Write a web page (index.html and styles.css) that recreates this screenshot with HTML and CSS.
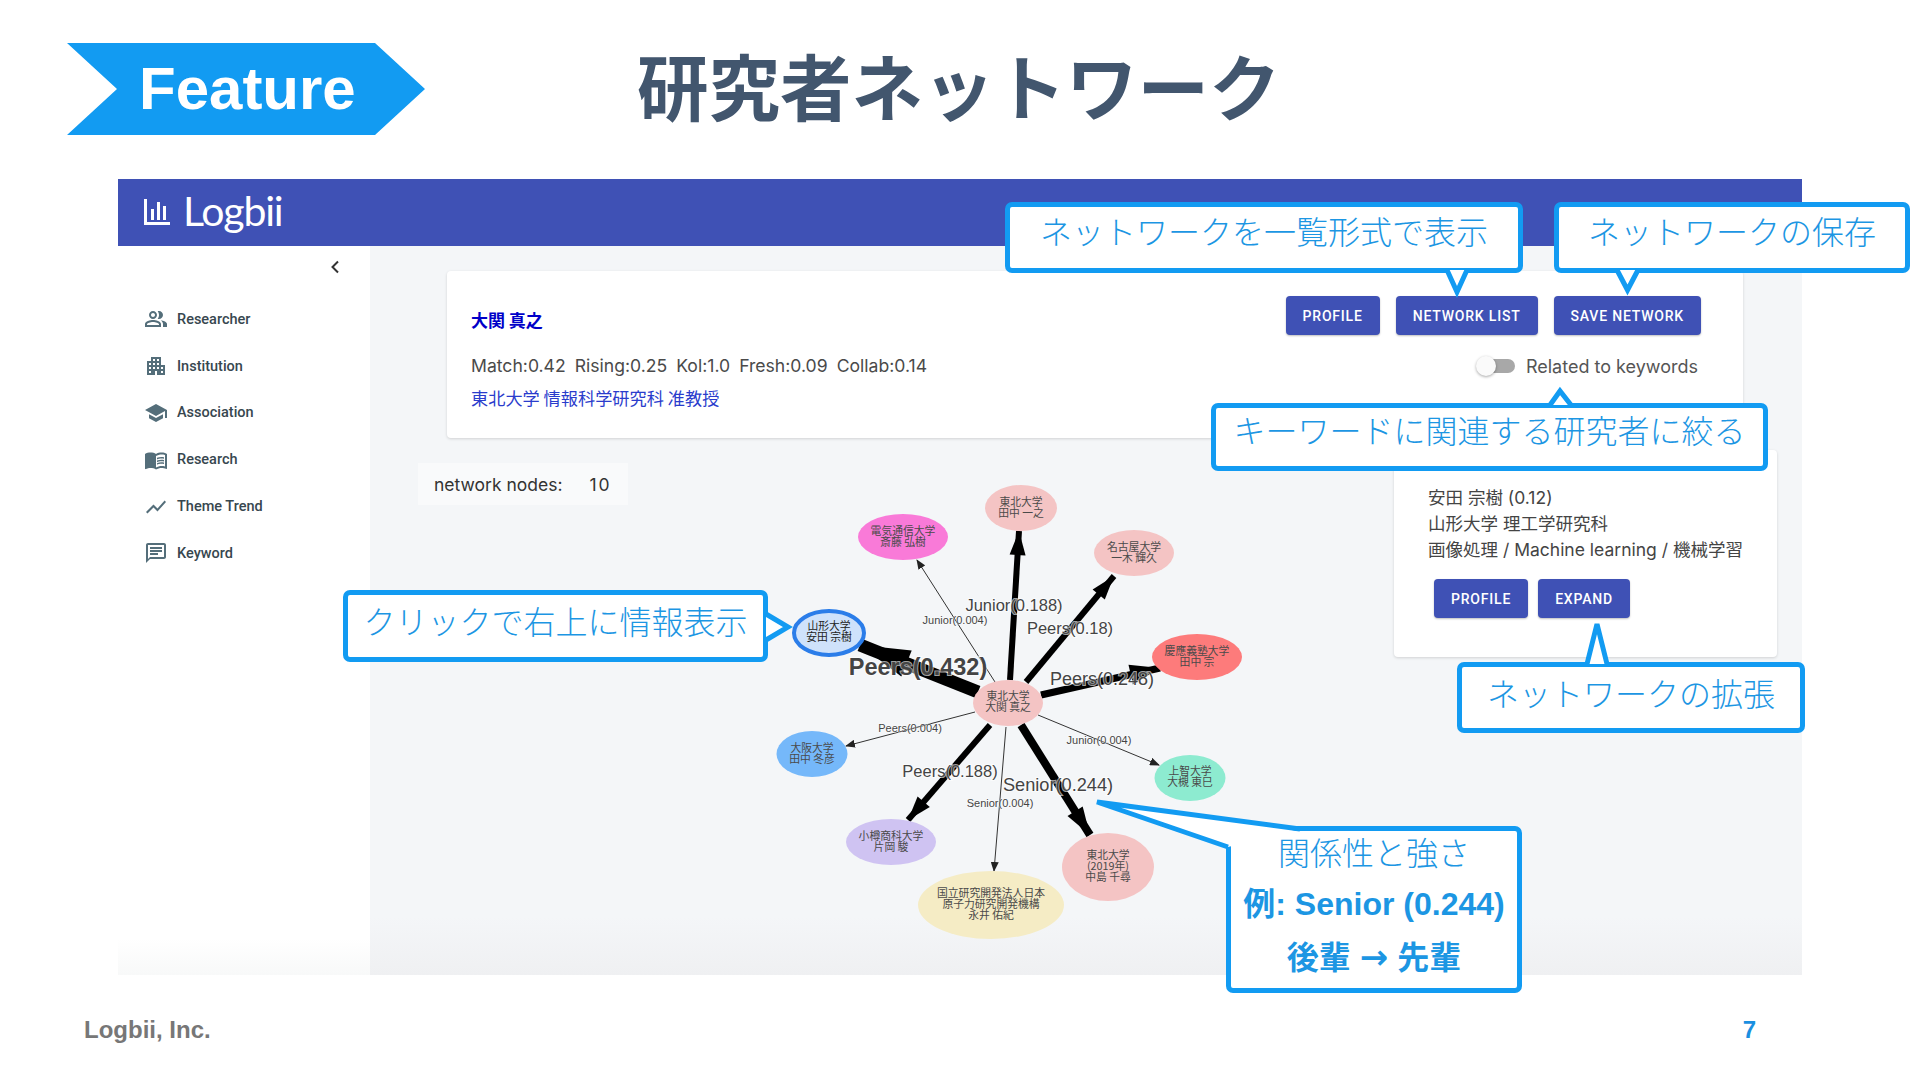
FILE: index.html
```html
<!DOCTYPE html>
<html>
<head>
    <title>Feature - 研究者ネットワーク</title>
    <link rel="stylesheet" href="styles.css">
</head>
<body>
<div class="slide">
    <!-- Slide heading -->
    <div class="slide-head">
        <div class="ribbon">Feature</div>
        <h1 class="slide-title">研究者ネットワーク</h1>
    </div>

    <!-- Screenshot of the app -->
    <div class="app">
        <header class="app-bar">
            <svg class="logo-mark" viewBox="0 0 26 26" fill="#fff">
                <rect x="0" y="0" width="3" height="26"/>
                <rect x="0" y="23" width="26" height="3"/>
                <rect x="7" y="10" width="3" height="11"/>
                <rect x="13" y="3" width="3" height="18"/>
                <rect x="19" y="7" width="3" height="14"/>
            </svg>
            <span class="logo-text">Logbii</span>
        </header>
        <div class="app-body">
            <nav class="sidebar">
                <div class="collapse">
                    <svg viewBox="0 0 12 16" width="12" height="16"><path d="M9 2.5L3.5 8 9 13.5" fill="none" stroke="#333" stroke-width="2"/></svg>
                </div>
                <a class="nav-item">
                    <svg class="nav-icon" viewBox="0 0 24 24"><path d="M16.67 13.13C18.04 14.06 19 15.32 19 17v3h4v-3c0-2.18-3.57-3.47-6.33-3.87zM15 12c2.21 0 4-1.79 4-4s-1.79-4-4-4c-.47 0-.91.1-1.33.24C14.5 5.27 15 6.58 15 8s-.5 2.73-1.33 3.76c.42.14.86.24 1.33.24zM9 12c2.21 0 4-1.79 4-4s-1.79-4-4-4-4 1.79-4 4 1.79 4 4 4zm0-6c1.1 0 2 .9 2 2s-.9 2-2 2-2-.9-2-2 .9-2 2-2zM9 13c-2.67 0-8 1.34-8 4v3h16v-3c0-2.66-5.33-4-8-4zm6 5H3v-.99C3.2 16.29 6.3 15 9 15s5.8 1.29 6 2z"/></svg>
                    Researcher
                </a>
                <a class="nav-item">
                    <svg class="nav-icon" viewBox="0 0 24 24"><path d="M17 11V3H7v4H3v14h8v-4h2v4h8V11h-4zM7 19H5v-2h2v2zm0-4H5v-2h2v2zm0-4H5V9h2v2zm4 4H9v-2h2v2zm0-4H9V9h2v2zm0-4H9V5h2v2zm4 8h-2v-2h2v2zm0-4h-2V9h2v2zm0-4h-2V5h2v2zm4 12h-2v-2h2v2zm0-4h-2v-2h2v2z"/></svg>
                    Institution
                </a>
                <a class="nav-item">
                    <svg class="nav-icon" viewBox="0 0 24 24"><path d="M5 13.18v4L12 21l7-3.82v-4L12 17l-7-3.82zM12 3L1 9l11 6 9-4.91V17h2V9L12 3z"/></svg>
                    Association
                </a>
                <a class="nav-item">
                    <svg class="nav-icon" viewBox="0 0 24 24"><path d="M21 5c-1.11-.35-2.33-.5-3.5-.5-1.95 0-4.05.4-5.5 1.5-1.45-1.1-3.55-1.5-5.5-1.5S2.45 4.9 1 6v14.65c0 .25.25.5.5.5.1 0 .15-.05.25-.05C3.1 20.45 5.05 20 6.5 20c1.95 0 4.05.4 5.5 1.5 1.35-.85 3.8-1.5 5.5-1.5 1.65 0 3.35.3 4.75 1.05.1.05.15.05.25.05.25 0 .5-.25.5-.5V6c-.6-.45-1.25-.75-2-1zm0 13.5c-1.1-.35-2.3-.5-3.5-.5-1.7 0-4.15.65-5.5 1.5V8c1.35-.85 3.8-1.5 5.5-1.5 1.2 0 2.4.15 3.5.5v11.5z"/><path d="M17.5 10.5c.88 0 1.73.09 2.5.26V9.24c-.79-.15-1.64-.24-2.5-.24-1.7 0-3.24.29-4.5.83v1.66c1.13-.64 2.7-.99 4.5-.99zM13 12.49v1.66c1.13-.64 2.7-.99 4.5-.99.88 0 1.73.09 2.5.26V11.9c-.79-.15-1.64-.24-2.5-.24-1.7 0-3.24.3-4.5.83zM17.5 14.33c-1.7 0-3.24.29-4.5.83v1.66c1.13-.64 2.7-.99 4.5-.99.88 0 1.73.09 2.5.26v-1.52c-.79-.16-1.64-.24-2.5-.24z"/></svg>
                    Research
                </a>
                <a class="nav-item">
                    <svg class="nav-icon" viewBox="0 0 24 24"><path d="M3.5 18.49l6-6.01 4 4L22 6.92l-1.41-1.41-7.09 7.97-4-4L2 16.99z"/></svg>
                    Theme Trend
                </a>
                <a class="nav-item">
                    <svg class="nav-icon" viewBox="0 0 24 24"><path d="M20 2H4c-1.1 0-2 .9-2 2v18l4-4h14c1.1 0 2-.9 2-2V4c0-1.1-.9-2-2-2zm0 14H6l-2 2V4h16v12zM6 9h12v2H6zm8 5H6v-2h8zm4-6H6V6h12z"/></svg>
                    Keyword
                </a>
            </nav>

            <main class="main">
                <!-- Network diagram, drawn in slide coordinates -->
                <svg class="graph" viewBox="370 246 1432 729">
                    <defs>
                        <marker id="tip" markerUnits="userSpaceOnUse" markerWidth="10" markerHeight="8" refX="9" refY="4" orient="auto">
                            <path d="M0 0L10 4L0 8z" fill="#222"/>
                        </marker>
                    </defs>

                    <g class="edge-thin">
                        <line x1="995" y1="682" x2="917" y2="560" marker-end="url(#tip)"/>
                        <line x1="975" y1="712" x2="846" y2="746" marker-end="url(#tip)"/>
                        <line x1="1038" y1="715" x2="1159" y2="765" marker-end="url(#tip)"/>
                        <line x1="1006" y1="727" x2="994" y2="871" marker-end="url(#tip)"/>
                    </g>
                    <g class="edge-bold">
                        <line x1="978" y1="692" x2="860" y2="645" stroke-width="13"/>
                        <polygon points="860,645 911.7,650.5 901.3,676.5"/>
                        <line x1="1010" y1="680" x2="1019" y2="531" stroke-width="6"/>
                        <polygon points="1019,531 1009.6,554.5 1025.6,555.5"/>
                        <line x1="1026" y1="682" x2="1114" y2="576" stroke-width="6"/>
                        <polygon points="1114,576 1104.8,599.6 1092.6,589.4"/>
                        <line x1="1041" y1="695" x2="1160" y2="668" stroke-width="7"/>
                        <polygon points="1160,668 1132.9,684.4 1128.5,664.8"/>
                        <line x1="990" y1="725" x2="908" y2="820" stroke-width="6"/>
                        <polygon points="908,820 929.8,807 917.6,796.6"/>
                        <line x1="1021" y1="725" x2="1090" y2="835" stroke-width="8"/>
                        <polygon points="1090,835 1082.7,806.5 1067.5,816.1"/>
                    </g>

                    <ellipse cx="1021" cy="508" rx="36" ry="23" fill="#f4c4c4"/>
                    <ellipse cx="1134" cy="553" rx="40" ry="23" fill="#f4c4c4"/>
                    <ellipse cx="903" cy="537" rx="45" ry="23" fill="#f97ad8"/>
                    <ellipse cx="1197" cy="657" rx="45" ry="23" fill="#fd7b7b"/>
                    <ellipse cx="829" cy="633" rx="35" ry="22" fill="#cfe2fb" stroke="#2b7de9" stroke-width="4"/>
                    <ellipse cx="812" cy="754" rx="35.5" ry="23" fill="#75b8fa"/>
                    <ellipse cx="1190" cy="778" rx="35.5" ry="23" fill="#8debd0"/>
                    <ellipse cx="891" cy="842" rx="45" ry="23" fill="#cfc3f2"/>
                    <ellipse cx="991" cy="905" rx="73" ry="34" fill="#f5ecc5"/>
                    <ellipse cx="1108" cy="867" rx="46" ry="34" fill="#f4c4c4"/>
                    <ellipse cx="1008" cy="703" rx="35" ry="23" fill="#f4c4c4"/>

                    <g class="node-label">
                        <text x="1021" y="506">東北大学</text><text x="1021" y="517">田中 一之</text>
                        <text x="1134" y="551">名古屋大学</text><text x="1134" y="562">一木 輝久</text>
                        <text x="903" y="535">電気通信大学</text><text x="903" y="546">斎藤 弘樹</text>
                        <text x="1197" y="655">慶應義塾大学</text><text x="1197" y="666">田中 宗</text>
                        <text class="node-dark" x="829" y="630">山形大学</text><text class="node-dark" x="829" y="641">安田 宗樹</text>
                        <text x="812" y="752">大阪大学</text><text x="812" y="763">田中 冬彦</text>
                        <text x="1190" y="775">上智大学</text><text x="1190" y="786">大槻 東巳</text>
                        <text x="891" y="840">小樽商科大学</text><text x="891" y="851">片岡 駿</text>
                        <text x="991" y="897">国立研究開発法人日本</text><text x="991" y="908">原子力研究開発機構</text><text x="991" y="919">永井 佑紀</text>
                        <text x="1108" y="859">東北大学</text><text x="1108" y="870">(2019年)</text><text x="1108" y="881">中島 千尋</text>
                        <text x="1008" y="700">東北大学</text><text x="1008" y="711">大関 真之</text>
                    </g>

                    <g class="edge-label">
                        <text class="label-top" x="918" y="675">Peers(0.432)</text>
                        <text class="label-mid" x="1014" y="611">Junior(0.188)</text>
                        <text class="label-mid" x="1070" y="634">Peers(0.18)</text>
                        <text class="label-wide" x="1102" y="685">Peers(0.248)</text>
                        <text class="label-mid" x="950" y="777">Peers(0.188)</text>
                        <text class="label-big" x="1058" y="791">Senior(0.244)</text>
                        <text class="label-small" x="955" y="624">Junior(0.004)</text>
                        <text class="label-small" x="910" y="732">Peers(0.004)</text>
                        <text class="label-small" x="1099" y="744">Junior(0.004)</text>
                        <text class="label-small" x="1000" y="807">Senior(0.004)</text>
                    </g>
                </svg>

                <section class="card">
                    <div>
                        <div class="person-name">大関 真之</div>
                        <div class="scores">
                            <span>Match:0.42</span><span>Rising:0.25</span><span>Kol:1.0</span><span>Fresh:0.09</span><span>Collab:0.14</span>
                        </div>
                        <div class="person-org">東北大学 情報科学研究科 准教授</div>
                    </div>
                    <div class="card-side">
                        <div class="btn-row">
                            <button class="btn">PROFILE</button>
                            <button class="btn">NETWORK LIST</button>
                            <button class="btn">SAVE NETWORK</button>
                        </div>
                        <div class="switch-row">
                            <span class="switch"><span class="switch-knob"></span></span>
                            Related to keywords
                        </div>
                    </div>
                </section>

                <div class="node-count"><span>network nodes:</span><span class="node-total">10</span></div>

                <section class="info-card">
                    <p>安田 宗樹 (0.12)</p>
                    <p>山形大学 理工学研究科</p>
                    <p>画像処理 / Machine learning / 機械学習</p>
                    <div class="info-btns">
                        <button class="btn">PROFILE</button>
                        <button class="btn">EXPAND</button>
                    </div>
                </section>
            </main>
        </div>
    </div>

    <footer class="slide-foot">
        <span>Logbii, Inc.</span>
        <span class="page-no">7</span>
    </footer>

    <!-- Callouts over the screenshot -->
    <div class="callout callout-list">ネットワークを一覧形式で表示</div>
    <div class="callout callout-save">ネットワークの保存</div>
    <div class="callout callout-keyword">キーワードに関連する研究者に絞る</div>
    <div class="callout callout-expand">ネットワークの拡張</div>
    <div class="callout callout-click">クリックで右上に情報表示</div>
    <div class="callout callout-edge">
        <div>関係性と強さ</div>
        <div class="callout-strong">例: Senior (0.244)</div>
        <div class="callout-strong">後輩 <span class="arrow">→</span> 先輩</div>
    </div>
    <svg class="tails" viewBox="0 0 1920 1081">
        <path d="M1447 270L1457 292L1467 270"/>
        <path d="M1617 270L1627.5 290L1638 270"/>
        <path d="M1550 405L1560 391L1571 405"/>
        <path d="M1587 664L1597 624L1607 664"/>
        <path d="M766 614L788 627L766 640"/>
        <path d="M1300 829L1097 802L1228 847"/>
    </svg>
</div>
</body>
</html>
```

FILE: styles.css
```css
* {
    box-sizing: border-box;
}

body {
    margin: 0;
    background-color: #fff;
    font-family: "Liberation Sans", "Noto Sans CJK JP", sans-serif;
}

.slide {
    position: relative;
    width: 1920px;
    height: 1081px;
    overflow: hidden;
    background-color: #fff;
}

/* Slide heading */
.slide-head {
    display: flex;
    height: 179px;
    padding: 43px 0 0 67px;
}

.ribbon {
    width: 358px;
    height: 92px;
    padding-left: 72px;
    background-color: #129bf2;
    clip-path: polygon(0 0, 308px 0, 100% 50%, 308px 100%, 0 100%, 50px 50%);
    color: #fff;
    font-size: 60px;
    font-weight: bold;
    line-height: 92px;
}

.slide-title {
    margin: 0 0 0 212px;
    color: #42566e;
    font-family: "Noto Sans CJK JP", sans-serif;
    font-size: 71.5px;
    font-weight: bold;
    line-height: 82px;
}

/* App frame */
.app {
    display: flex;
    flex-direction: column;
    width: 1684px;
    height: 796px;
    margin-left: 118px;
}

.app-bar {
    display: flex;
    flex: none;
    align-items: center;
    height: 67px;
    padding-left: 26px;
    background-color: #3f51b5;
}

.logo-mark {
    width: 26px;
    height: 26px;
    margin-top: -1px;
}

.logo-text {
    margin: -5px 0 0 13px;
    color: #fff;
    font-family: "Lato", sans-serif;
    font-size: 41px;
    font-weight: 400;
    letter-spacing: -1.2px;
}

.app-body {
    display: flex;
    flex: 1;
    min-height: 0;
}

.sidebar {
    flex: none;
    width: 252px;
    background: linear-gradient(#fff 95%, #f8f9f9 100%);
}

.collapse {
    display: flex;
    align-items: center;
    justify-content: flex-end;
    height: 42px;
    margin-bottom: 8px;
    padding-right: 29px;
}

.nav-item {
    display: flex;
    align-items: center;
    gap: 9px;
    height: 46.8px;
    padding-left: 26px;
    color: #37474f;
    font-family: "Roboto", sans-serif;
    font-size: 14.5px;
    font-weight: 500;
}

.nav-icon {
    width: 24px;
    height: 24px;
    fill: #546e7a;
}

.main {
    position: relative;
    flex: 1;
    padding: 25px 59px 0 77px;
    background: linear-gradient(#f4f6f8 92%, #eff0f2 100%);
}

.graph {
    position: absolute;
    top: 0;
    left: 0;
    width: 1432px;
    height: 729px;
}

.edge-thin line {
    stroke: #333;
    stroke-width: 1;
}

.edge-bold line {
    stroke: #000;
}

.edge-bold polygon {
    fill: #000;
}

.node-label text {
    fill: #4a4a4a;
    font-family: "Noto Sans CJK JP", sans-serif;
    font-size: 10.8px;
    text-anchor: middle;
}

.node-label .node-dark {
    fill: #222;
}

/* light halo keeps the labels readable over the edges */
.edge-label text {
    fill: #444;
    stroke: rgba(255, 255, 255, 0.65);
    stroke-width: 2px;
    paint-order: stroke;
    font-family: "Liberation Sans", sans-serif;
    text-anchor: middle;
}

.edge-label .label-top {
    font-size: 23.5px;
    font-weight: bold;
}

.edge-label .label-mid {
    font-size: 16.5px;
}

.edge-label .label-wide {
    font-size: 18px;
}

.edge-label .label-big {
    font-size: 18.2px;
}

.edge-label .label-small {
    font-size: 11px;
    stroke-width: 1px;
}

/* Cards */
.card {
    position: relative;
    display: flex;
    justify-content: space-between;
    height: 167px;
    padding: 34px 42px 0 24px;
    border-radius: 4px;
    background-color: #fff;
    box-shadow: 0 1px 3px rgba(0, 0, 0, 0.15);
}

.person-name {
    color: #0000c8;
    font-family: "Noto Sans CJK JP", sans-serif;
    font-size: 17px;
    font-weight: bold;
    line-height: 30px;
}

.scores {
    display: flex;
    gap: 9px;
    margin-top: 16px;
    color: #4a4a4a;
    font-family: "Inter", sans-serif;
    font-size: 17.6px;
    line-height: 30px;
}

.person-org {
    margin-top: 4px;
    color: #2a3ccc;
    font-family: "Noto Sans CJK JP", sans-serif;
    font-size: 17.2px;
    line-height: 26px;
}

.card-side {
    display: flex;
    flex-direction: column;
    align-items: flex-end;
    margin-top: -9px;
}

.btn-row {
    display: flex;
    gap: 16px;
}

.btn {
    height: 39px;
    padding: 0 17px;
    border: none;
    border-radius: 4px;
    background-color: #3f51b5;
    box-shadow: 0 1px 2px rgba(0, 0, 0, 0.25);
    color: #fff;
    font-family: "Roboto", sans-serif;
    font-size: 14px;
    font-weight: 500;
    letter-spacing: 0.8px;
}

.switch-row {
    display: flex;
    align-items: center;
    height: 30px;
    margin-top: 16px;
    padding-right: 3px;
    color: #555;
    font-family: "Inter", sans-serif;
    font-size: 18px;
}

.switch {
    position: relative;
    width: 34px;
    height: 14px;
    margin-right: 11px;
    border-radius: 7px;
    background-color: #a8a8a8;
}

.switch-knob {
    position: absolute;
    top: -3px;
    left: -5px;
    width: 20px;
    height: 20px;
    border-radius: 50%;
    background-color: #fafafa;
    box-shadow: 0 1px 3px rgba(0, 0, 0, 0.35);
}

.node-count {
    position: relative;
    display: flex;
    align-items: center;
    gap: 27px;
    width: 210px;
    height: 42px;
    margin: 25px 0 0 -29px;
    padding-left: 16px;
    background-color: #f9fafb;
    color: #333;
    font-family: "Inter", sans-serif;
    font-size: 17.5px;
}

.node-total {
    letter-spacing: 2px;
}

.info-card {
    position: absolute;
    top: 204px;
    left: 1024px;
    width: 383px;
    height: 207px;
    padding: 35px 0 0 34px;
    border-radius: 4px;
    background-color: #fff;
    box-shadow: 0 1px 3px rgba(0, 0, 0, 0.15);
    color: #444;
    font-family: "Inter", "Noto Sans CJK JP", sans-serif;
    font-size: 17.5px;
}

.info-card p {
    margin: 0;
    line-height: 26px;
}

.info-btns {
    display: flex;
    gap: 10px;
    margin: 16px 0 0 6px;
}

/* Slide footer */
.slide-foot {
    display: flex;
    justify-content: space-between;
    padding: 41px 164px 0 84px;
    color: #777;
    font-size: 24px;
    font-weight: bold;
}

.page-no {
    color: #1a8fe0;
}

/* Callouts */
.callout {
    position: absolute;
    display: flex;
    flex-direction: column;
    align-items: center;
    justify-content: center;
    padding-bottom: 12px;
    border: 5px solid #129bf2;
    border-radius: 7px;
    background-color: #fff;
    color: #1c96e3;
    font-family: "Noto Sans CJK JP", sans-serif;
    font-size: 32px;
    font-weight: 300;
}

.callout-list {
    top: 202px;
    left: 1005px;
    width: 518px;
    height: 71px;
    padding-bottom: 15px;
}

.callout-save {
    top: 202px;
    left: 1554px;
    width: 356px;
    height: 71px;
    padding-bottom: 15px;
}

.callout-keyword {
    top: 403px;
    left: 1211px;
    width: 557px;
    height: 68px;
    padding-bottom: 16px;
}

.callout-expand {
    top: 662px;
    left: 1457px;
    width: 348px;
    height: 71px;
}

.callout-click {
    top: 590px;
    left: 343px;
    width: 425px;
    height: 72px;
}

.callout-edge {
    top: 826px;
    left: 1226px;
    width: 296px;
    height: 167px;
    padding-bottom: 10px;
    line-height: 53px;
}

.callout-strong {
    font-family: "Liberation Sans", "Noto Sans CJK JP", sans-serif;
    font-weight: bold;
}

.arrow {
    font-family: "DejaVu Sans", sans-serif;
    font-size: 34px;
}

.tails {
    position: absolute;
    top: 0;
    left: 0;
    width: 1920px;
    height: 1081px;
    pointer-events: none;
}

.tails path {
    fill: #fff;
    stroke: #129bf2;
    stroke-width: 5;
    stroke-linejoin: miter;
}
```
